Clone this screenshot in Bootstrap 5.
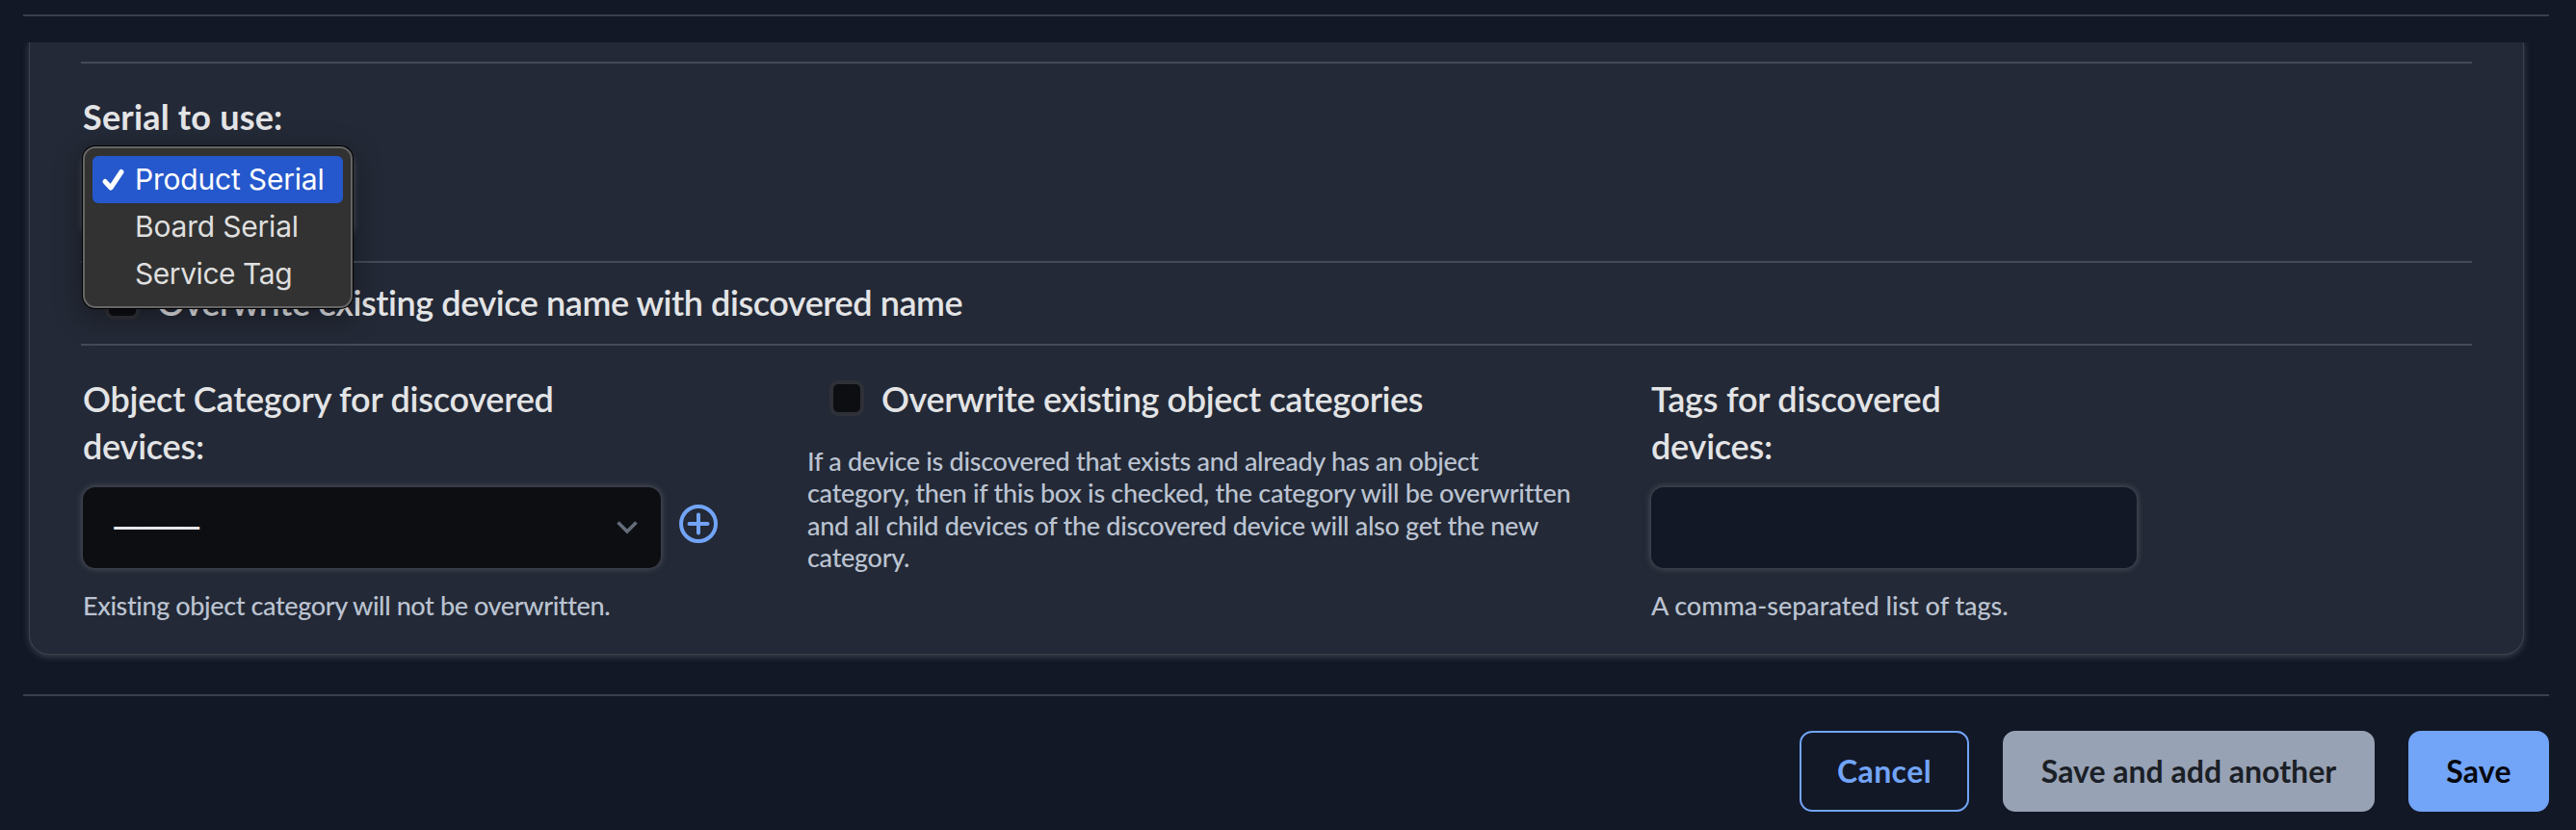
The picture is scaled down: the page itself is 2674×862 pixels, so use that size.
<!DOCTYPE html>
<html lang="en" data-bs-theme="dark">
<head>
<meta charset="utf-8">
<meta name="viewport" content="width=device-width, initial-scale=1">
<title>Discovery options</title>
<link href="https://cdn.jsdelivr.net/npm/bootstrap@5.3.0/dist/css/bootstrap.min.css" rel="stylesheet">
<style>
  body { background: #121826; color: #e3e4e6; font-family: "Lato", "Liberation Sans", sans-serif; font-variant-ligatures: none; height: 862px; overflow: hidden; }
  .page { padding: 15px 28px 0 24px; }
  .rule { height: 2px; background: #3b3e4c; }
  .rule-in { height: 2px; background: #444a57; }
  .panel-wrap { overflow: hidden; margin: 27px 0 0 -24px; padding: 0 40px 42px 31px; }
  .panel { background: #232936; height: 635px; width: 2588px; padding: 20px 53px 0; border-radius: 0 0 20px 20px; box-shadow: 0 0 0 1px #3f424d, 0 2px 7px 1px rgba(110, 110, 122, .5); }
  .field-label { font-size: 36px; line-height: 49px; font-weight: 600; letter-spacing: -.22px; margin: 0; display: block; white-space: nowrap; }
  .lbl-strong { letter-spacing: .2px; font-weight: 700; }
  .lbl-name { letter-spacing: -.43px; margin-left: 18px; }
  .lbl-over { letter-spacing: -.36px; }
  .hint { font-size: 27px; line-height: 33.4px; font-weight: 500; color: #bbc3d1; letter-spacing: -.3px; margin: 0; white-space: nowrap; }
  .hint-cat { letter-spacing: -.39px; margin-top: 22px; }
  .hint-over { margin-top: 23px; }
  .hint-tags { letter-spacing: -.04px; margin-top: 22px; }
  .serial-group { height: 205px; padding: 31px 2px 0; }
  .serial-box { height: 85px; width: 281px; margin-top: 14px; border-radius: 12px; background: #0d0e12; }
  .glow { box-shadow: 0 0 6px 1px rgba(120, 122, 130, .5); }
  .name-row { height: 84px; padding: 17px 0 0 25px; }
  .tick { flex: none; width: 36px; height: 37px; border: 4px solid #2f3138; border-radius: 9px; background: #0d0e12; }
  .tick-name { margin-top: 5px; }
  .tick-over { margin: 5px 18px 0 23px; }
  .cols { display: grid; grid-template-columns: 752px 876px 1fr; padding: 31px 2px 0; }
  .cat-select { width: 600px; height: 84px; margin-top: 18px; border-radius: 13px; background: #0d0e12; padding: 0 24px 0 30px; }
  .dashes { font: 500 32px/1 "Inter", sans-serif; letter-spacing: -5px; color: #e8e8ea; padding-bottom: 2px; }
  .add-icon { margin: 36px 0 0 19px; }
  .tag-input { width: 504px; height: 84px; margin-top: 18px; border: 0; border-radius: 13px; background: #121826; }
  .tag-input:focus { background: #121826; }
  .menu { position: absolute; left: 2px; top: 86px; width: 280px; height: 168px; padding: 8px; border: 2px solid #666; border-radius: 13px; background: #323232; box-shadow: 0 0 0 1px #000, 0 8px 30px rgba(0, 0, 0, .38); font: 400 30px/49px "Inter", sans-serif; letter-spacing: -.2px; color: #dfdfdf; z-index: 5; }
  .menu-item { height: 49px; padding-left: 44px; border-radius: 6px; position: relative; white-space: nowrap; }
  .menu-item.on { background: #2558cc; color: #fff; }
  .menu-item.tight { letter-spacing: -.45px; }
  .menu-item svg { position: absolute; left: 9px; top: 12px; }
  .actions { padding-top: 36px; gap: 35px; }
  .act { height: 84px; border-radius: 13px; font-size: 32px; font-weight: 700; padding: 0; display: flex; align-items: center; justify-content: center; border-width: 2px; }
  .act-cancel { width: 176px; color: #72a4f7; border-color: #72a4f7; letter-spacing: .4px; }
  .act-another { width: 386px; background: #98a2b5; color: #1b1f26; border-color: #98a2b5; }
  .act-save { width: 146px; background: #72a4f7; color: #07090f; border-color: #72a4f7; letter-spacing: .2px; }
</style>
</head>
<body>
<main class="page">
  <div class="rule"></div>
  <div class="panel-wrap">
    <section class="panel">
      <div class="rule-in"></div>
      <div class="serial-group position-relative">
        <label class="field-label lbl-strong">Serial to use:</label>
        <div class="serial-box glow"></div>
        <div class="menu">
          <div class="menu-item on">
            <svg width="26" height="26" viewBox="0 0 26 26" fill="none" stroke="#fff" stroke-width="5" stroke-linecap="round" stroke-linejoin="round"><path d="M4 14.5 L10 21 L21 4.5"/></svg>
            Product Serial
          </div>
          <div class="menu-item">Board Serial</div>
          <div class="menu-item tight">Service Tag</div>
        </div>
      </div>
      <div class="rule-in"></div>
      <div class="name-row d-flex">
        <span class="tick tick-name"></span>
        <label class="field-label lbl-name">Overwrite existing device name with discovered name</label>
      </div>
      <div class="rule-in"></div>
      <div class="cols">
        <div>
          <label class="field-label">Object Category for discovered<br>devices:</label>
          <div class="d-flex align-items-start">
            <div class="cat-select glow d-flex align-items-center justify-content-between">
              <span class="dashes">---------</span>
              <svg width="22" height="14" viewBox="0 0 22 14" fill="none" stroke="#646c7a" stroke-width="3.6"><path d="M1.5 1.5 L11 11 L20.5 1.5"/></svg>
            </div>
            <svg class="add-icon" width="40" height="40" viewBox="0 0 40 40" fill="none" stroke="#72a4f7" stroke-width="4" stroke-linecap="round"><circle cx="20" cy="20" r="18"/><path d="M10.5 20H29.5M20 10.5V29.5"/></svg>
          </div>
          <p class="hint hint-cat">Existing object category will not be overwritten.</p>
        </div>
        <div>
          <div class="d-flex">
            <span class="tick tick-over"></span>
            <label class="field-label lbl-over">Overwrite existing object categories</label>
          </div>
          <p class="hint hint-over">If a device is discovered that exists and already has an object<br>category, then if this box is checked, the category will be overwritten<br>and all child devices of the discovered device will also get the new<br>category.</p>
        </div>
        <div>
          <label class="field-label">Tags for discovered<br>devices:</label>
          <input class="tag-input form-control glow" type="text">
          <p class="hint hint-tags">A comma-separated list of tags.</p>
        </div>
      </div>
    </section>
  </div>
  <div class="rule"></div>
  <div class="actions d-flex justify-content-end">
    <button class="act btn act-cancel">Cancel</button>
    <button class="act btn act-another">Save and add another</button>
    <button class="act btn act-save">Save</button>
  </div>
</main>
<script src="https://cdn.jsdelivr.net/npm/bootstrap@5.3.0/dist/js/bootstrap.bundle.min.js"></script>
</body>
</html>
